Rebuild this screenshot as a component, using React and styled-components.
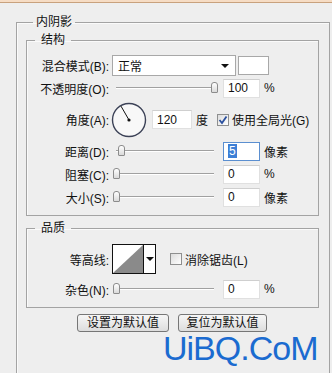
import React from "react";
import styled, { createGlobalStyle } from "styled-components";

const GlobalStyle = createGlobalStyle`
  html, body {
    margin: 0;
    padding: 0;
    background: #eeeeee;
  }
  body {
    font-family: "Liberation Sans", "Noto Sans CJK SC", sans-serif;
    font-size: 12px;
    color: #111;
  }
`;

const Warp = styled.div`
  position: relative;
  width: 332px;
  height: 373px;
  overflow: hidden;
  background: #eeeeee;
`;

const TopBar = styled.div`
  height: 2px;
  background: #f6dcc4;
  border-bottom: 1px solid #c8a17d;
`;

const Group = styled.fieldset`
  box-sizing: border-box;
  margin: ${(p) => p.$margin};
  width: ${(p) => p.$width}px;
  min-width: 0;
  height: ${(p) => (p.$height ? p.$height + "px" : "auto")};
  padding: ${(p) => p.$padding || "0"};
  border: 1px solid #a3a3a3;
  box-shadow: inset 1px 1px 0 #fafafa;
`;

const GroupTitle = styled.legend`
  margin-left: ${(p) => p.$offset}px;
  padding: 0 ${(p) => p.$pad}px;
  font-size: 12px;
  line-height: 14px;
  color: #111;
`;

const Row = styled.div`
  display: flex;
  align-items: center;
  height: ${(p) => p.$h}px;
  margin-top: ${(p) => p.$mt || 0}px;
`;

const Label = styled.div`
  width: 82px;
  flex: none;
  text-align: right;
  white-space: nowrap;
  margin-right: ${(p) => p.$gap ?? 3}px;
`;

const SelectBox = styled.div`
  box-sizing: border-box;
  display: flex;
  align-items: center;
  justify-content: space-between;
  width: 124px;
  height: 21px;
  padding: 0 6px 0 5px;
  background: #fff;
  border: 1px solid #a8a8a8;
`;

const Arrow = styled.span`
  width: 0;
  height: 0;
  border-left: 4px solid transparent;
  border-right: 4px solid transparent;
  border-top: 4px solid #111;
`;

const Swatch = styled.div`
  box-sizing: border-box;
  width: 31px;
  height: 19px;
  margin-left: 2px;
  background: #fff;
  border: 1px solid #a8a8a8;
`;

const SliderWrap = styled.div`
  position: relative;
  width: 106px;
  height: 12px;
  flex: none;
`;

const Track = styled.div`
  position: absolute;
  left: 4px;
  right: 4px;
  top: 5px;
  height: 1px;
  background: #a0a0a0;
  border-bottom: 1px solid #fff;
`;

const Thumb = styled.div`
  position: absolute;
  top: 0;
  box-sizing: border-box;
  width: 7px;
  height: 11px;
  border: 1px solid #8c8c8c;
  border-radius: 3px 3px 1px 1px;
  background: linear-gradient(#ffffff, #dadada);
`;

const NumInput = styled.div`
  box-sizing: border-box;
  display: flex;
  align-items: center;
  width: ${(p) => p.$w || 37}px;
  height: 19px;
  margin-left: ${(p) => p.$ml ?? 5}px;
  padding-left: 4px;
  background: #fff;
  border: 1px solid ${(p) => (p.$focus ? "#5b8fd0" : "#e0e0e0")};
  border-top-color: ${(p) => (p.$focus ? "#5b8fd0" : "#cfcfcf")};
`;

const Selected = styled.span`
  background: #3d7fd6;
  color: #fff;
  padding: 0 1px;
`;

const Unit = styled.span`
  margin-left: ${(p) => p.$ml ?? 4}px;
`;

const CheckBox = styled.span`
  box-sizing: border-box;
  display: inline-flex;
  align-items: center;
  justify-content: center;
  width: 12px;
  height: 12px;
  margin-left: ${(p) => p.$ml}px;
  margin-right: 3px;
  border: 1px solid #8e8f8f;
  background: linear-gradient(135deg, #dcdcdc, #ffffff);
`;

const ContourBox = styled.div`
  display: flex;
  height: 30px;
  box-sizing: border-box;
  border: 1px solid #111;
  background: #fff;
`;

const ContourDrop = styled.div`
  display: flex;
  align-items: center;
  justify-content: center;
  width: 11px;
  border-left: 1px solid #111;
`;

const ButtonRow = styled.div`
  display: flex;
  gap: 9px;
  margin: 6px 0 0 60px;
`;

const Button = styled.button`
  box-sizing: border-box;
  width: ${(p) => p.$w}px;
  height: 18px;
  padding: 0;
  font-family: inherit;
  font-size: 12px;
  line-height: 14px;
  color: #111;
  border: 1px solid #767676;
  border-radius: 3px;
  background: linear-gradient(#f6f6f6, #dddddd);
`;

const Watermark = styled.div`
  position: absolute;
  left: 163px;
  top: 336px;
  font-family: "Liberation Sans", sans-serif;
  font-size: 34px;
  line-height: 24px;
  letter-spacing: -1px;
  color: #1b6bd0;
`;

function Slider({ value, max = 100 }) {
  const pos = 1 + Math.round((value / max) * 98);
  return (
    <SliderWrap>
      <Track />
      <Thumb style={{ left: pos }} />
    </SliderWrap>
  );
}

function Dial({ angle }) {
  const r = 16;
  const rad = (angle * Math.PI) / 180;
  const x = 18 + r * Math.cos(rad);
  const y = 18 - r * Math.sin(rad);
  return (
    <svg width="36" height="36" viewBox="0 0 36 36">
      <circle cx="18" cy="18" r="16.5" fill="#f8f8f8" stroke="#3c4257" strokeWidth="1.4" />
      <line x1="18" y1="18" x2={x} y2={y} stroke="#111" strokeWidth="1" />
      <circle cx="18" cy="18" r="1.6" fill="#111" />
    </svg>
  );
}

function Check({ checked, ml }) {
  return (
    <CheckBox $ml={ml}>
      {checked && (
        <svg width="10" height="10" viewBox="0 0 10 10">
          <path d="M1.5 5 L4 8 L8.5 1.5" fill="none" stroke="#2a4f9e" strokeWidth="1.8" />
        </svg>
      )}
    </CheckBox>
  );
}

export default function App() {
  return (
    <>
      <GlobalStyle />
      <Warp>
        <TopBar />
        <Group $margin="12px 0 0 16px" $width={314} $height={420}>
          <GroupTitle $offset={16} $pad={3}>内阴影</GroupTitle>

          <Group $margin="4px 0 0 9px" $width={293} $padding="0 0 8px 0">
            <GroupTitle $offset={8} $pad={6}>结构</GroupTitle>
            <Row $h={21} $mt={8}>
              <Label>混合模式(B):</Label>
              <SelectBox>
                <span>正常</span>
                <Arrow />
              </SelectBox>
              <Swatch />
            </Row>
            <Row $h={20} $mt={2}>
              <Label>不透明度(O):</Label>
              <Slider value={100} />
              <NumInput>100</NumInput>
              <Unit>%</Unit>
            </Row>
            <Row $h={35} $mt={4}>
              <Label $gap={2}>角度(A):</Label>
              <Dial angle={120} />
              <NumInput $w={40} $ml={5}>120</NumInput>
              <Unit $ml={4}>度</Unit>
              <Check checked ml={9} />
              <span>使用全局光(G)</span>
            </Row>
            <Row $h={20} $mt={4}>
              <Label>距离(D):</Label>
              <Slider value={5} max={100} />
              <NumInput $focus>
                <Selected>5</Selected>
              </NumInput>
              <Unit>像素</Unit>
            </Row>
            <Row $h={20} $mt={3}>
              <Label>阻塞(C):</Label>
              <Slider value={0} />
              <NumInput>0</NumInput>
              <Unit>%</Unit>
            </Row>
            <Row $h={20} $mt={3}>
              <Label>大小(S):</Label>
              <Slider value={0} max={250} />
              <NumInput>0</NumInput>
              <Unit>像素</Unit>
            </Row>
          </Group>

          <Group $margin="5px 0 0 9px" $width={293} $padding="0 0 8px 0">
            <GroupTitle $offset={8} $pad={6}>品质</GroupTitle>
            <Row $h={30} $mt={9}>
              <Label>等高线:</Label>
              <ContourBox>
                <svg width="30" height="28" viewBox="0 0 30 28">
                  <polygon points="0,28 30,0 30,28" fill="#8a8a8a" />
                </svg>
                <ContourDrop>
                  <Arrow />
                </ContourDrop>
              </ContourBox>
              <Check ml={14} />
              <span>消除锯齿(L)</span>
            </Row>
            <Row $h={20} $mt={5}>
              <Label>杂色(N):</Label>
              <Slider value={0} />
              <NumInput>0</NumInput>
              <Unit>%</Unit>
            </Row>
          </Group>

          <ButtonRow>
            <Button $w={92}>设置为默认值</Button>
            <Button $w={89}>复位为默认值</Button>
          </ButtonRow>
        </Group>
        <Watermark>UiBQ.CoM</Watermark>
      </Warp>
    </>
  );
}
